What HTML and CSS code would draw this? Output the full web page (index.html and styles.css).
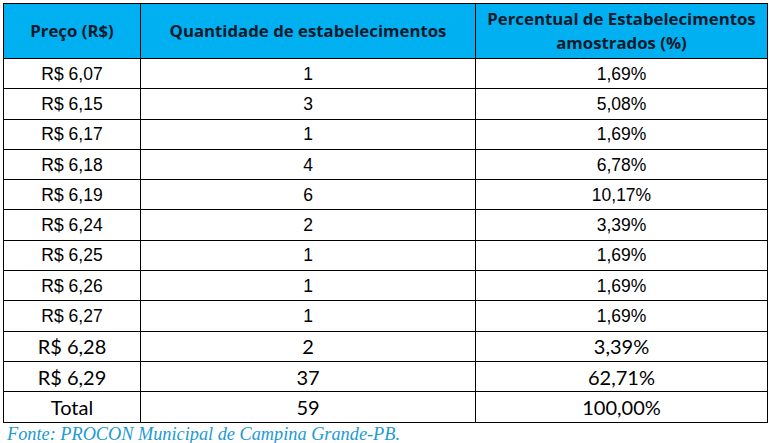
FILE: index.html
```html
<!DOCTYPE html>
<html lang="pt-BR">
<head>
<meta charset="utf-8">
<link rel="stylesheet" href="styles.css">
</head>
<body>
<div class="page">
  <table class="price-table">
    <colgroup>
      <col class="c1"><col class="c2"><col class="c3">
    </colgroup>
    <thead>
      <tr>
        <th>Preço (R$)</th>
        <th>Quantidade de estabelecimentos</th>
        <th>Percentual de Estabelecimentos<br>amostrados (%)</th>
      </tr>
    </thead>
    <tbody>
      <tr><td>R$ 6,07</td><td>1</td><td>1,69%</td></tr>
      <tr><td>R$ 6,15</td><td>3</td><td>5,08%</td></tr>
      <tr><td>R$ 6,17</td><td>1</td><td>1,69%</td></tr>
      <tr><td>R$ 6,18</td><td>4</td><td>6,78%</td></tr>
      <tr><td>R$ 6,19</td><td>6</td><td>10,17%</td></tr>
      <tr><td>R$ 6,24</td><td>2</td><td>3,39%</td></tr>
      <tr><td>R$ 6,25</td><td>1</td><td>1,69%</td></tr>
      <tr><td>R$ 6,26</td><td>1</td><td>1,69%</td></tr>
      <tr><td>R$ 6,27</td><td>1</td><td>1,69%</td></tr>
      <tr class="alt"><td>R$ 6,28</td><td>2</td><td>3,39%</td></tr>
      <tr class="alt"><td>R$ 6,29</td><td>37</td><td>62,71%</td></tr>
      <tr class="alt"><td>Total</td><td>59</td><td>100,00%</td></tr>
    </tbody>
  </table>
  <p class="source">Fonte: PROCON Municipal de Campina Grande-PB.</p>
</div>
</body>
</html>
```
FILE: styles.css
```css
html, body {
  margin: 0;
  padding: 0;
  background: #ffffff;
}
.page {
  padding: 3px 0 0 3px;
}
.price-table {
  border-collapse: collapse;
  table-layout: fixed;
  width: 764px;
  font-family: "Liberation Sans", Arial, sans-serif;
  color: #000;
}
.c1 { width: 137px; }
.c2 { width: 335px; }
.c3 { width: 292px; }
.price-table th,
.price-table td {
  border: 1px solid #000;
  text-align: center;
  padding: 0;
}
.price-table th {
  background: #00b0f0;
  color: #0e1a2b;
  font-family: "Open Sans", "Noto Sans", sans-serif;
  font-weight: 700;
  font-size: 16.8px;
  line-height: 24px;
  height: 54px;
}
.price-table td {
  height: 29.3px;
  font-size: 17.5px;
  line-height: 20px;
}
.price-table tr.alt td {
  font-family: "Lato", "Liberation Sans", sans-serif;
  font-size: 20px;
}
.source {
  margin: 1px 0 0 4px;
  font-family: "Liberation Serif", "Times New Roman", serif;
  font-style: italic;
  font-size: 18.3px;
  line-height: 20px;
  color: #1c9ad6;
}
```
